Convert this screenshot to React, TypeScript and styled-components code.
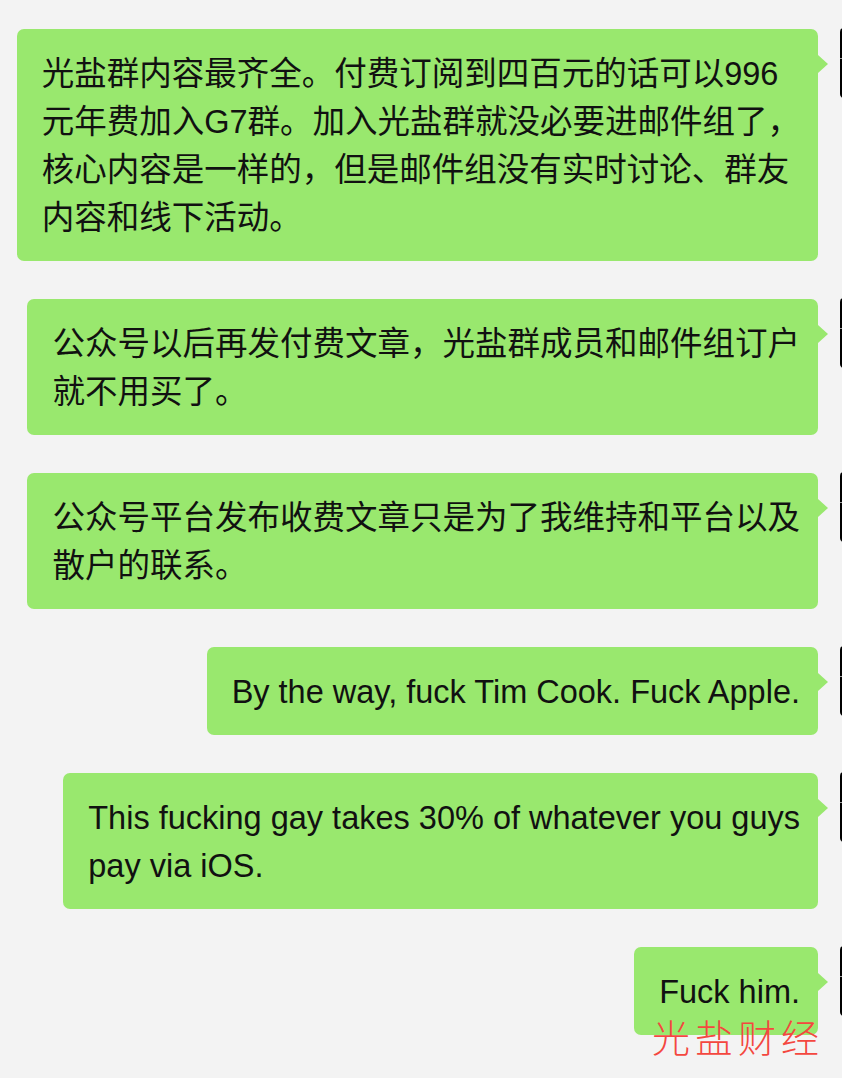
import * as React from "react"
import styled, { createGlobalStyle } from "styled-components"

const GlobalStyle = createGlobalStyle`
    html, body {
        margin: 0;
        padding: 0;
        background: #f3f3f3;
    }
    body {
        font-family: "Liberation Sans", "Noto Sans CJK SC", sans-serif;
        color: #111;
    }
`;

const Page = styled.div`
    position: relative;
    width: 842px;
    height: 1078px;
    overflow: hidden;
    background: #f3f3f3;
`;

const Thread = styled.div`
    display: flex;
    flex-direction: column;
    gap: 38px;
    padding-top: 29px;
`;

const Row = styled.div`
    display: flex;
    justify-content: flex-end;
    align-items: flex-start;
    gap: 22px;
    margin-right: -68px;
`;

const Bubble = styled.div`
    position: relative;
    background: #99e86e;
    border-radius: 7px;
    padding: 21px 18px 19px 25px;
    font-size: 32.5px;
    line-height: 48px;
    white-space: nowrap;
    &::after {
        content: "";
        position: absolute;
        right: -10px;
        top: 26px;
        border-style: solid;
        border-width: 9px 0 9px 10px;
        border-color: transparent transparent transparent #99e86e;
    }
`;

const Avatar = styled.div`
    flex: none;
    width: 70px;
    height: 70px;
    margin-top: -1px;
    border-radius: 4px;
    background: linear-gradient(to bottom, #000 0, #000 30px, #9a9a9a 30px, #9a9a9a 31px, #000 31px);
`;

const Watermark = styled.div`
    position: absolute;
    right: 18px;
    bottom: 20px;
    font-family: "Noto Sans CJK SC", sans-serif;
    font-weight: 300;
    font-size: 38px;
    line-height: 44px;
    letter-spacing: 5px;
    color: #f4473f;
`;

const messages: React.ReactNode[] = [
    <>光盐群内容最齐全。付费订阅到四百元的话可以996<br />元年费加入G7群。加入光盐群就没必要进邮件组了，<br />核心内容是一样的，但是邮件组没有实时讨论、群友<br />内容和线下活动。</>,
    <>公众号以后再发付费文章，光盐群成员和邮件组订户<br />就不用买了。</>,
    <>公众号平台发布收费文章只是为了我维持和平台以及<br />散户的联系。</>,
    <>By the way, fuck Tim Cook. Fuck Apple.</>,
    <>This fucking gay takes 30% of whatever you guys<br />pay via iOS.</>,
    <>Fuck him.</>,
]

const App = () => {
    return (
        <Page>
            <GlobalStyle />
            <Thread>
                {messages.map((m, i) => (
                    <Row key={i}>
                        <Bubble>{m}</Bubble>
                        <Avatar />
                    </Row>
                ))}
            </Thread>
            <Watermark>光盐财经</Watermark>
        </Page>
    )
}

export default App;
